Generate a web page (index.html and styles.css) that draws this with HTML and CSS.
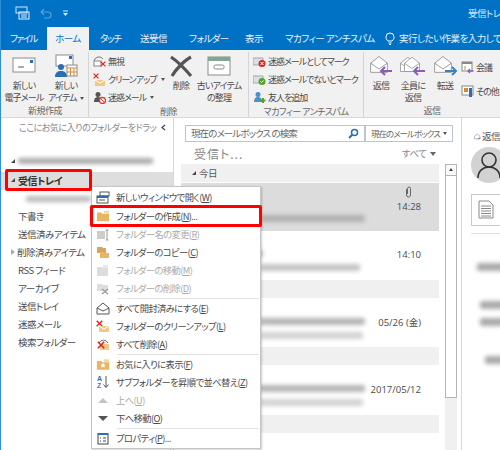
FILE: index.html
```html
<!DOCTYPE html>
<html lang="ja">
<head>
<meta charset="utf-8">
<title>受信トレイ</title>
<link rel="stylesheet" href="styles.css">
</head>
<body>
<svg class="defs" width="0" height="0">
  <symbol id="env" viewBox="0 0 24 24"><path d="M2 11 12 3l10 8v11H2z" fill="#fff" stroke="#8a8a8a"/><path d="M2 11l10 7 10-7" fill="none" stroke="#8a8a8a"/></symbol>
  <symbol id="fold" viewBox="0 0 16 14"><path d="M1 3h5l1 1.500h8V13H1z" fill="#e8b565"/><path d="M9 1h6v3H9z" fill="#f3d9a8"/></symbol>
  <symbol id="xr" viewBox="0 0 10 10"><path d="M1 1l8 8M9 1 1 9" stroke="#d8281c" stroke-width="2"/></symbol>
</svg>
<div class="app">
  <header class="titlebar">
    <span class="qat">
      <svg width="15" height="15" viewBox="0 0 15 15"><rect x="1" y="1" width="11" height="6" fill="none" stroke="#cfe3f4"/><rect x="4" y="6" width="10" height="7" fill="none" stroke="#e3effa"/><path d="M6 9h6M6 11h6" stroke="#e3effa"/></svg>
      <svg width="12" height="12" viewBox="0 0 12 12"><path d="M1 4h7a3 3 0 0 1 0 6H4M1 4l3-3M1 4l3 3" fill="none" stroke="#5a9fd8" stroke-width="1.200"/></svg>
      <svg width="7" height="7" viewBox="0 0 7 7"><path d="M1 1h5" stroke="#dcebf7"/><path d="M1 3h5L3.500 6z" fill="#dcebf7"/></svg>
    </span>
    <span class="doc">受信トレイ</span>
  </header>
  <nav class="tabs">
    <span class="tab file">ファイル</span>
    <span class="tab active">ホーム</span>
    <span class="tab touch">タッチ</span>
    <span class="tab send">送受信</span>
    <span class="tab folder">フォルダー</span>
    <span class="tab view">表示</span>
    <span class="tab mcafee">マカフィー アンチスパム</span>
    <svg class="bulb" width="10" height="13" viewBox="0 0 10 13"><path d="M3 9C1 7.500 1 5.500 1 5a4 4 0 0 1 8 0c0 .5 0 2.500-2 4zM3.500 11h3M4 12.500h2" fill="none" stroke="#fff"/></svg>
    <span class="tab tell">実行したい作業を入力してください</span>
  </nav>
  <section class="ribbon">
    <div class="group g-new">
      <div class="g-body">
        <div class="big w44">
          <svg class="ic" width="24" height="24" viewBox="0 0 24 24"><rect x="1" y="4" width="22" height="14" fill="#fff" stroke="#8c8c8c"/><rect x="18" y="6" width="3" height="3" fill="#2a6fb5"/><path d="M6 13h6" stroke="#aaa" stroke-width="2"/></svg>
          <span>新しい<br>電子メール</span>
        </div>
        <div class="big w36">
          <svg class="ic" width="24" height="24" viewBox="0 0 24 24"><rect x="2" y="1" width="17" height="11" fill="#fff" stroke="#8c8c8c"/><rect x="15" y="2" width="3" height="3" fill="#2a6fb5"/><circle cx="7" cy="13" r="3" fill="#2a6fb5"/><path d="M1 23c0-5 3-6 6-6s6 1 6 6z" fill="#2a6fb5"/><rect x="13" y="11" width="10" height="11" fill="#fff" stroke="#8c8c8c"/><path d="M13 14h10M13 18h10M16.500 14v8M20 14v8" stroke="#d08a3a"/></svg>
          <span>新しい<br>アイテム <i class="drop"></i></span>
        </div>
      </div>
      <div class="g-label">新規作成</div>
    </div>
    <div class="group g-del">
      <div class="g-body">
        <div class="stack s-del">
          <div class="row"><svg width="13" height="13" viewBox="0 0 13 13"><path d="M1 6a5 5 0 0 1 9-2" fill="none" stroke="#777"/><rect x="1" y="6" width="7" height="5" fill="#fff" stroke="#888"/><use href="#xr" x="7" y="6" width="6" height="6"/></svg>無視</div>
          <div class="row"><svg width="13" height="13" viewBox="0 0 13 13"><use href="#xr" width="6" height="6"/><path d="M2 7h10v6H2z" fill="#efc988"/><path d="M2 7l5 3 5-3" fill="none" stroke="#fff"/></svg>クリーンアップ <i class="drop"></i></div>
          <div class="row"><svg width="13" height="13" viewBox="0 0 13 13"><circle cx="5" cy="3.500" r="2.500" fill="#555"/><path d="M1 11c0-4 2-5 4-5s3 1 3 2v3z" fill="#555"/><circle cx="9.500" cy="9.500" r="3" fill="#fff" stroke="#d43f2f" stroke-width="1.300"/><path d="M7.500 7.500l4 4" stroke="#d43f2f"/></svg>迷惑メール <i class="drop"></i></div>
        </div>
        <div class="big w28">
          <svg class="ic" width="24" height="24" viewBox="0 0 24 24"><path d="M2 3c6 4 14 12 20 19M22 3C16 6 7 15 3 22" stroke="#555" stroke-width="3.200" fill="none"/></svg>
          <span>削除</span>
        </div>
        <div class="big w50">
          <svg class="ic" width="24" height="24" viewBox="0 0 24 24"><rect x="1" y="3" width="22" height="18" fill="#fff" stroke="#8c8c8c"/><rect x="1" y="3" width="22" height="4" fill="#7fa68f"/><rect x="7" y="11" width="10" height="4" rx="1.500" fill="#fff" stroke="#888"/></svg>
          <span>古いアイテム<br>の整理</span>
        </div>
      </div>
      <div class="g-label">削除</div>
    </div>
    <div class="group g-mc">
      <div class="g-body">
        <div class="stack s-mc">
          <div class="row"><svg width="13" height="13" viewBox="0 0 13 13"><path d="M0 3h10v7H0z" fill="#d9e0e8" stroke="#9aa"/><circle cx="9" cy="8.500" r="3.500" fill="#d8281c"/><path d="M7.500 7l3 3M10.500 7l-3 3" stroke="#fff"/></svg>迷惑メールとしてマーク</div>
          <div class="row"><svg width="13" height="13" viewBox="0 0 13 13"><path d="M0 3h10v7H0z" fill="#d9e0e8" stroke="#9aa"/><circle cx="9" cy="8.500" r="3.500" fill="#5aa02c"/><path d="M7.500 8.500l1 1 2-2" fill="none" stroke="#fff"/></svg>迷惑メールでないとマーク</div>
          <div class="row"><svg width="13" height="13" viewBox="0 0 13 13"><circle cx="5" cy="3.500" r="2.500" fill="#4a8fd0"/><path d="M1 11c0-4 2-5 4-5s4 1 4 5z" fill="#4a8fd0"/><path d="M10 7v5M7.500 9.500h5" stroke="#5aa02c" stroke-width="2"/></svg>友人を追加</div>
        </div>
      </div>
      <div class="g-label">マカフィー アンチスパム</div>
    </div>
    <div class="group g-re">
      <div class="g-body">
        <div class="big w30">
          <svg class="ic" width="24" height="24" viewBox="0 0 24 24"><use href="#env" width="20" height="20"/><path d="M23 17H12M16 13l-4 4 4 4" fill="none" stroke="#8a5fb0" stroke-width="2"/></svg>
          <span>返信</span>
        </div>
        <div class="big w30">
          <svg class="ic" width="26" height="24" viewBox="0 0 26 24"><use href="#env" x="-1" width="18" height="20"/><use href="#env" x="3" width="18" height="20"/><path d="M25 17H14M18 13l-4 4 4 4" fill="none" stroke="#8a5fb0" stroke-width="2"/></svg>
          <span>全員に<br>返信</span>
        </div>
        <div class="big w30">
          <svg class="ic" width="24" height="24" viewBox="0 0 24 24"><use href="#env" width="20" height="20"/><path d="M12 17h11M19 13l4 4-4 4" fill="none" stroke="#3f7fbf" stroke-width="2"/></svg>
          <span>転送</span>
        </div>
        <div class="stack s-re">
          <div class="row"><svg width="13" height="13" viewBox="0 0 13 13"><rect x="1" y="1" width="10" height="9" fill="#fff" stroke="#888"/><rect x="1" y="1" width="10" height="2" fill="#888"/><path d="M3 6h2M3 8h2" stroke="#d08a3a"/><path d="M12.500 10H7M9 8l-2 2 2 2" fill="none" stroke="#8a5fb0" stroke-width="1.300"/></svg>会議</div>
          <div class="row"><svg width="13" height="13" viewBox="0 0 13 13"><rect x="1" y="1" width="11" height="9" fill="#fff" stroke="#888"/><rect x="3" y="3" width="4" height="4" fill="#d08a3a"/><rect x="8" y="3" width="3" height="9" fill="#2a6fb5"/></svg>その他</div>
        </div>
      </div>
      <div class="g-label">返信</div>
    </div>
  </section>
  <main class="content">
    <aside class="nav">
      <div class="fav"><span>ここにお気に入りのフォルダーをドラッグしま</span><svg width="5" height="7" viewBox="0 0 5 7"><path d="M4 1 1 3.500 4 6" fill="none" stroke="#444" stroke-width="1.200"/></svg></div>
      <div class="account"><i class="tri down"></i><b class="blur b-acc"></b></div>
      <div class="inbox"><i class="tri down"></i>受信トレイ</div>
      <div class="folder-row sub"><b class="blur b-sub"></b></div>
      <div class="folder-row">下書き</div>
      <div class="folder-row">送信済みアイテム</div>
      <div class="folder-row arrowed"><i class="tri right"></i>削除済みアイテム</div>
      <div class="folder-row">RSS フィード</div>
      <div class="folder-row">アーカイブ</div>
      <div class="folder-row">送信トレイ</div>
      <div class="folder-row">迷惑メール</div>
      <div class="folder-row">検索フォルダー</div>
    </aside>
    <section class="list">
      <div class="searchbar">
        <div class="search"><span>現在のメールボックス の検索</span>
          <svg width="11" height="11" viewBox="0 0 11 11"><circle cx="6.500" cy="4.500" r="3" fill="none" stroke="#2a6fb5" stroke-width="1.500"/><path d="M4.500 6.500 1 10" stroke="#2a6fb5" stroke-width="2"/></svg>
        </div>
        <div class="scope">現在のメールボックス <i class="drop"></i></div>
      </div>
      <div class="list-main">
        <div class="mails">
          <div class="list-head"><span class="ttl">受信ト...</span><span class="all">すべて <i class="drop big-drop"></i></span></div>
          <div class="day"><i class="tri down"></i>今日</div>
          <div class="mail sel">
            <div class="meta t1"><svg width="7" height="12" viewBox="0 0 7 12"><path d="M1.500 3v6a2 2 0 0 0 4 0V2.500a1.500 1.500 0 0 0-3 0V8" fill="none" stroke="#666"/></svg><span>14:28</span></div>
            <b class="blur b1"></b>
          </div>
          <div class="mail m2">
            <div class="meta"><span>14:10</span></div>
            <b class="blur b2"></b><b class="blur b3"></b>
          </div>
          <div class="day"></div>
          <div class="mail m3">
            <div class="meta"><span>05/26 (金)</span></div>
            <b class="blur b4"></b><b class="blur b5"></b>
          </div>
          <div class="day"></div>
          <div class="mail m3 m4">
            <div class="meta"><span>2017/05/12</span></div>
            <b class="blur b4"></b><b class="blur b5"></b>
          </div>
          <div class="day"></div>
        </div>
        <div class="scroll">
          <div class="thumb"><span class="up"></span></div>
        </div>
      </div>
    </section>
    <section class="reading">
      <div class="reply"><svg width="13" height="11" viewBox="0 0 13 11"><path d="M1 5l5-4 5 4v5H1z" fill="#fff" stroke="#777"/><path d="M12 9H7" stroke="#8a5fb0" stroke-width="1.500"/></svg>返信</div>
      <div class="avatar"><svg width="26" height="28" viewBox="0 0 26 28"><circle cx="13" cy="9" r="7" fill="none" stroke="#333" stroke-width="1.600"/><path d="M2 27c0-7 5-11 11-11s11 4 11 11" fill="none" stroke="#333" stroke-width="1.600"/></svg></div>
      <div class="attach"><svg width="16" height="19" viewBox="0 0 16 19"><path d="M1 1h10l4 4v13H1z" fill="#fff" stroke="#888"/><path d="M3 6h10M3 8.500h10M3 11h10M3 13.500h10M3 16h10" stroke="#888"/></svg></div>
      <b class="blur r1"></b><b class="blur r2"></b><b class="blur r3"></b><b class="blur r4"></b>
    </section>
  </main>

  <div class="hl hl-inbox"></div>
  <div class="hl hl-item"></div>
  <div class="menu">
    <div class="mi"><svg width="14" height="13" viewBox="0 0 14 13"><rect x="4" y="1" width="9" height="4" fill="#fff" stroke="#555"/><rect x="1" y="5" width="11" height="7" fill="#fff" stroke="#555"/><rect x="1" y="5" width="11" height="2" fill="#2a6fb5"/><path d="M3 9h6" stroke="#555"/></svg><span>新しいウィンドウで開く(<u>W</u>)</span></div>
    <div class="mi gap"><svg width="14" height="12" viewBox="0 0 16 14"><use href="#fold" width="16" height="14"/></svg><span>フォルダーの作成(<u>N</u>)...</span></div>
    <div class="mi off"><svg width="14" height="13" viewBox="0 0 14 13"><rect x="1" y="3" width="8" height="8" fill="#ccc"/><path d="M11 2v10M9.500 2h3M9.500 12h3" stroke="#999"/></svg><span>フォルダー名の変更(<u>R</u>)</span></div>
    <div class="mi"><svg width="14" height="13" viewBox="0 0 14 13"><path d="M1 1h5l1 1h3v5H1z" fill="#d9a55a"/><path d="M4 6h4l1 1h4v5H4z" fill="#e8b565"/></svg><span>フォルダーのコピー(<u>C</u>)</span></div>
    <div class="mi off"><svg width="14" height="13" viewBox="0 0 14 13"><path d="M1 3h5l1 1h5v8H1z" fill="#ddd"/><path d="M7 1h5v3H7z" fill="#e8e8e8"/></svg><span>フォルダーの移動(<u>M</u>)</span></div>
    <div class="mi off sep"><svg width="14" height="13" viewBox="0 0 14 13"><path d="M1 2h5l1 1h5v6H1z" fill="#ddd"/><path d="M6 7l6 5M12 7l-6 5" stroke="#999" stroke-width="1.300"/></svg><span>フォルダーの削除(<u>D</u>)</span></div>
    <div class="mi"><svg width="14" height="13" viewBox="0 0 14 13"><path d="M1 6l6-5 6 5v6H1z" fill="#fff" stroke="#555"/><path d="M1 6l6 3 6-3" fill="none" stroke="#555"/></svg><span>すべて開封済みにする(<u>E</u>)</span></div>
    <div class="mi"><svg width="14" height="13" viewBox="0 0 14 13"><use href="#xr" width="7" height="7"/><path d="M3 6h10v6H3z" fill="#efc988"/><path d="M3 6l5 3 5-3" fill="none" stroke="#fff"/></svg><span>フォルダーのクリーンアップ(<u>L</u>)</span></div>
    <div class="mi sep"><svg width="14" height="13" viewBox="0 0 14 13"><path d="M3 5a5 5 0 0 1 9 0" fill="none" stroke="#777"/><path d="M4 6h9v6H4z" fill="#efc988"/><use href="#xr" x="1" y="3" width="8" height="8"/></svg><span>すべて削除(<u>A</u>)</span></div>
    <div class="mi"><svg width="14" height="13" viewBox="0 0 16 14"><use href="#fold" width="16" height="14"/><path d="M8 5l1 2 2 .3-1.500 1.400.4 2L8 9.700l-1.900 1 .4-2L5 7.300 7 7z" fill="#fff"/></svg><span>お気に入りに表示(<u>F</u>)</span></div>
    <div class="mi"><svg width="14" height="14" viewBox="0 0 14 14"><text class="az a" x="1" y="6">A</text><text class="az z" x="1" y="13">Z</text><path d="M10 1v11M7.500 9.500 10 12.500l2.500-3" fill="none" stroke="#555"/></svg><span>サブフォルダーを昇順で並べ替え(<u>Z</u>)</span></div>
    <div class="mi off"><svg width="14" height="13" viewBox="0 0 14 13"><path d="M7 4l5 5H2z" fill="#c4c4c4"/></svg><span>上へ(<u>U</u>)</span></div>
    <div class="mi sep"><svg width="14" height="13" viewBox="0 0 14 13"><path d="M7 9 2 4h10z" fill="#555"/></svg><span>下へ移動(<u>O</u>)</span></div>
    <div class="mi"><svg width="14" height="13" viewBox="0 0 14 13"><rect x="2" y="1.500" width="10" height="10.500" fill="#fff" stroke="#444"/><rect x="2" y="1" width="10" height="2" fill="#2a6fb5"/><path d="M4 6h1M4 9h1M7 6h3M7 9h3" stroke="#444"/></svg><span>プロパティ(<u>P</u>)...</span></div>
  </div>
</div>
</body>
</html>
```
FILE: styles.css
```css
* { box-sizing: border-box; }
html, body { margin: 0; padding: 0; }
body { width: 500px; height: 450px; overflow: hidden; background: #fff; }
.defs { position: absolute; }
.app {
  position: relative; width: 500px; height: 450px; overflow: hidden;
  font-family: "Noto Sans CJK JP", "Noto Sans", sans-serif;
  font-size: 9.500px; line-height: 13px; color: #4a4a4a; letter-spacing: -0.5px;
  font-feature-settings: "palt"; background: #fff;
  border-left: 1px solid #2f8fd8;
}
.titlebar { height: 27px; margin-left: -1px; background: #0072c6; display: flex; align-items: center; padding: 0 0 0 15px; color: #dcebf7; }
.qat { display: flex; align-items: center; gap: 10px; }
.doc { margin-left: auto; width: 32px; white-space: nowrap; }
.tabs { height: 23px; margin-left: -1px; background: #0072c6; display: flex; align-items: center; color: #eaf3fb; white-space: nowrap; }
.tab { display: block; flex: none; }
.file { margin-left: 10px; width: 37px; letter-spacing: -1.500px; }
.active { width: 42px; height: 23px; background: #f1f1f1; color: #0072c6; text-align: center; line-height: 23px; }
.touch { margin-left: 11px; width: 40px; letter-spacing: -1.200px; }
.send { width: 49px; }
.folder { width: 56px; }
.view { width: 40px; }
.mcafee { width: 100px; }
.bulb { margin-right: 4px; flex: none; }
.ribbon { height: 68px; margin-left: -1px; background: #f1f1f1; border-bottom: 1px solid #d8d8d8; display: flex; }
.group { display: flex; flex-direction: column; border-right: 1px solid #d4d4d4; margin-top: 2px; height: 65px; flex: none; }
.g-new { width: 89px; padding-left: 2px; }
.g-del { width: 160px; }
.g-mc { width: 115px; }
.g-re { width: 136px; border-right: 0; }
.g-body { height: 55px; display: flex; }
.g-label { height: 12px; text-align: center; color: #666; line-height: 12px; white-space: nowrap; font-size: 9px; }
.big { display: flex; flex-direction: column; align-items: center; text-align: center; flex: none; line-height: 12px; white-space: nowrap; padding-top: 2px; font-size: 9px; letter-spacing: -0.800px; }
.ic { height: 24px; margin-bottom: 2px; flex: none; }
.w44 { width: 44px; }
.w36 { width: 40px; }
.w28 { width: 28px; }
.w50 { width: 48px; }
.w30 { width: 30px; margin-left: 2px; }
.stack { display: flex; flex-direction: column; flex: none; }
.s-del { width: 78px; padding-left: 4px; }
.s-mc { padding-left: 4px; }
.s-re { padding: 6px 0 0 1px; gap: 6px; }
.row { height: 18px; display: flex; align-items: center; gap: 2px; white-space: nowrap; font-size: 9px; letter-spacing: -1px; }
.row svg { flex: none; }
.drop { display: inline-block; width: 0; height: 0; border: 2px solid transparent; border-top: 3px solid #555; border-bottom: 0; margin-left: 2px; vertical-align: middle; }
.big-drop { border-width: 3px; border-bottom: 0; border-top: 4px solid #666; }

.content { display: flex; height: 332px; }
.nav { width: 173px; flex: none; border-right: 1px solid #d8d8d8; padding-top: 2px; }
.fav { height: 14px; display: flex; align-items: center; padding: 0 7px 0 18px; justify-content: space-between; color: #888; font-size: 9px; white-space: nowrap; overflow: hidden; }
.fav span { width: 138px; overflow: hidden; }
.account { height: 18px; margin-top: 18px; display: flex; align-items: center; padding-left: 10px; }
.inbox { height: 18px; margin-top: 2px; padding-bottom: 2px; background: #dedede; font-weight: 700; display: flex; align-items: center; padding-left: 10px; font-size: 10px; color: #333; }
.tri { display: inline-block; width: 0; height: 0; flex: none; margin-right: 3px; }
.tri.down { border-left: 4px solid transparent; border-bottom: 4px solid #444; }
.tri.right { border: 3px solid transparent; border-left: 4px solid #aaa; border-right: 0; margin-right: 2px; }
.folder-row { height: 18px; padding-left: 17px; display: flex; align-items: center; }
.arrowed { padding-left: 10px; }
.sub { padding-left: 25px; height: 17px; }
.blur { display: block; background: #a4a4a4; filter: blur(2px); border-radius: 2px; }
.b-acc { width: 135px; height: 6px; background: #aaa; }
.b-sub { width: 65px; height: 6px; background: #bbb; }

.list { width: 288px; flex: none; padding-left: 7px; border-right: 1px solid #d8d8d8; }
.searchbar { height: 17px; margin: 7px 0 0 4px; display: flex; color: #666; }
.search { width: 180px; border: 1px solid #b8c6d6; background: #fff; display: flex; justify-content: space-between; align-items: center; padding: 0 5px; white-space: nowrap; letter-spacing: -0.900px; }
.scope { width: 88px; border: 1px solid #b8c6d6; display: flex; align-items: center; justify-content: space-between; padding: 0 5px; white-space: nowrap; font-size: 8.500px; letter-spacing: -1px; }
.list-main { display: flex; }
.mails { width: 258px; flex: none; }
.list-head { height: 22px; display: flex; justify-content: space-between; align-items: center; padding: 0 3px 0 13px; color: #888; }
.ttl { font-size: 12px; letter-spacing: 1px; }
.day { height: 18px; background: #f0f0f0; display: flex; align-items: center; padding-left: 11px; margin-bottom: 1px; color: #555; }
.mail { position: relative; }
.sel { height: 48px; background: #dcdcdc; }
.m2 { height: 49px; }
.m3 { height: 48px; }
.m4 { height: 49px; }
.meta { position: absolute; right: 18px; top: 17px; font-family: "Open Sans", "Noto Sans CJK JP", sans-serif; font-size: 9.500px; letter-spacing: 0; font-feature-settings: normal; display: flex; flex-direction: column; align-items: center; }
.t1 { top: 3px; }
.t1 span { margin-top: 2px; }
.mail .blur { position: absolute; height: 7px; }
.b1 { left: 79px; top: 32px; width: 105px; background: #b0b0b0; }
.b2 { left: 70px; top: 19px; width: 12px; background: #c4c4c4; }
.b3 { left: 79px; top: 33px; width: 100px; background: #c4c4c4; }
.b4 { left: 79px; top: 19px; width: 105px; background: #b4b4b4; }
.b5 { left: 79px; top: 33px; width: 103px; background: #d2d2d2; }
.scroll { width: 12px; margin: 22px 0 0 6px; background: #f0f0f0; flex: none; height: 286px; }
.thumb { height: 234px; background: #fff; border: 1px solid #b4b4b4; border-top: 0; }
.up { display: block; height: 12px; background: #fafafa; border: 1px solid #b4b4b4; border-width: 1px 0; position: relative; }
.up::after { content: ""; position: absolute; left: 3px; top: 3px; border: 2px solid transparent; border-bottom: 3px solid #444; border-top: 0; }

.reading { flex: 1; padding: 12px 0 0 12px; color: #555; position: relative; overflow: hidden; white-space: nowrap; }
.reply { display: flex; align-items: center; gap: 1px; height: 12px; }
.avatar { width: 36px; height: 36px; border-radius: 50%; background: #d2d2d2; margin: 5px 0 0 -3px; display: flex; align-items: center; justify-content: center; }
.attach { width: 40px; height: 32px; margin: 11px 0 0 -3px; border: 1px solid #c8c8c8; padding: 5px 0 0 6px; }
.reading::after { content: ""; position: absolute; left: 9px; top: 115px; width: 40px; height: 1px; background: #e0e0e0; }
.reading .blur { position: absolute; background: #aaa; height: 8px; }
.r1 { left: 15px; top: 145px; width: 30px; }
.r2 { left: 18px; top: 183px; width: 30px; }
.r3 { left: 18px; top: 200px; width: 24px; }
.r4 { left: 23px; top: 238px; width: 26px; }

.menu { position: absolute; left: 90px; top: 186px; width: 170px; height: 263px; background: #fff; border: 1px solid #c6c6c6; box-shadow: 1px 1px 2px rgba(0,0,0,.2); padding-top: 1px; }
.mi { height: 18px; display: flex; align-items: center; gap: 6px; padding-left: 4px; white-space: nowrap; font-size: 9.300px; letter-spacing: -0.600px; }
.mi svg { flex: none; }
.mi.gap { margin-top: 1px; }
.off { color: #aaa; }
.sep { position: relative; height: 19px; margin-bottom: 1px; }
.sep::after { content: ""; position: absolute; left: 25px; right: 1px; bottom: -1px; height: 1px; background: #e2e2e2; }
.az { font-family: "Liberation Sans", sans-serif; font-size: 7px; font-weight: 700; letter-spacing: 0; }
.a { fill: #2a6fb5; }
.z { fill: #8a5fb0; }
.hl { position: absolute; border: 3px solid #f00; border-radius: 2px; z-index: 2; }
.hl-inbox { left: 4px; top: 169px; width: 87px; height: 22px; }
.hl-item { left: 89px; top: 205px; width: 172px; height: 22px; }
```
